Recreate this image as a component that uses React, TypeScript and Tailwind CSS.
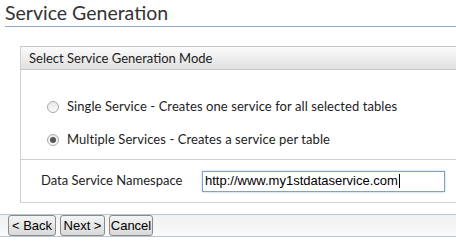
export default function App() {
  return (
    <div className="w-[456px] h-[248px] overflow-hidden bg-white font-['Lato',sans-serif] text-[#222]">
      <div className="ml-[5px] pt-[2px] h-[27px] border-b border-[#8fa6c6] text-[19.5px] leading-[22px] text-[#333]">
        Service Generation
      </div>

      <div className="ml-[20px] mt-[19px] w-[460px] border border-[#cfcfcf] border-t-0">
        <div className="h-[24px] border-y border-[#c8c8c8] bg-gradient-to-b from-[#fbfbfb] to-[#e0e0e0] pl-[8px] text-[13px] leading-[22px]">
          Select Service Generation Mode
        </div>

        <div className="pt-[30px] pb-[12px] pl-[26px] flex flex-col gap-[19px] text-[13px] tracking-[0.08px]">
          <Radio label="Single Service - Creates one service for all selected tables" />
          <Radio checked label="Multiple Services - Creates a service per table" />
        </div>

        <div className="border-t border-[#d0d0d0] h-[43px] flex items-center pl-[20px]">
          <span className="text-[13px] w-[160px]">Data Service Namespace</span>
          <div className="ml-[1px] w-[243px] h-[21px] border border-[#7ea3d3] shadow-[0_0_2px_#a9c6ec] flex items-center pl-[2px] font-['Liberation_Sans',sans-serif] text-[13px] text-black">
            http://www.my1stdataservice.com
            <span className="ml-[1px] w-px h-[14px] bg-black" />
          </div>
        </div>
      </div>

      <div className="mt-[11px] h-[23px] border-y border-[#b9c7d0] bg-gradient-to-b from-[#f1f1f1] to-[#fafafa] flex items-center gap-[4px] pl-[8px]">
        <Btn label="< Back" w="w-[48px]" />
        <Btn label="Next >" w="w-[45px]" />
        <Btn label="Cancel" w="w-[44px]" />
      </div>
    </div>
  );
}

function Radio({ label, checked }: { label: string; checked?: boolean }) {
  return (
    <div className="flex items-center gap-[8px] h-[14px]">
      <span className="w-[12px] h-[12px] rounded-full border border-[#a8a8a8] bg-gradient-to-b from-[#e8e8e8] to-[#fafafa] flex items-center justify-center">
        {checked && <span className="w-[6px] h-[6px] rounded-full bg-[#555]" />}
      </span>
      <span>{label}</span>
    </div>
  );
}

function Btn({ label, w }: { label: string; w: string }) {
  return (
    <button className={`${w} h-[21px] px-0 border border-[#8a8a8a] rounded-[3px] bg-gradient-to-b from-[#f4f4f4] to-[#d9d9d9] font-['Liberation_Sans',sans-serif] text-[13px] leading-[19px] text-black text-center`}>
      {label}
    </button>
  );
}
